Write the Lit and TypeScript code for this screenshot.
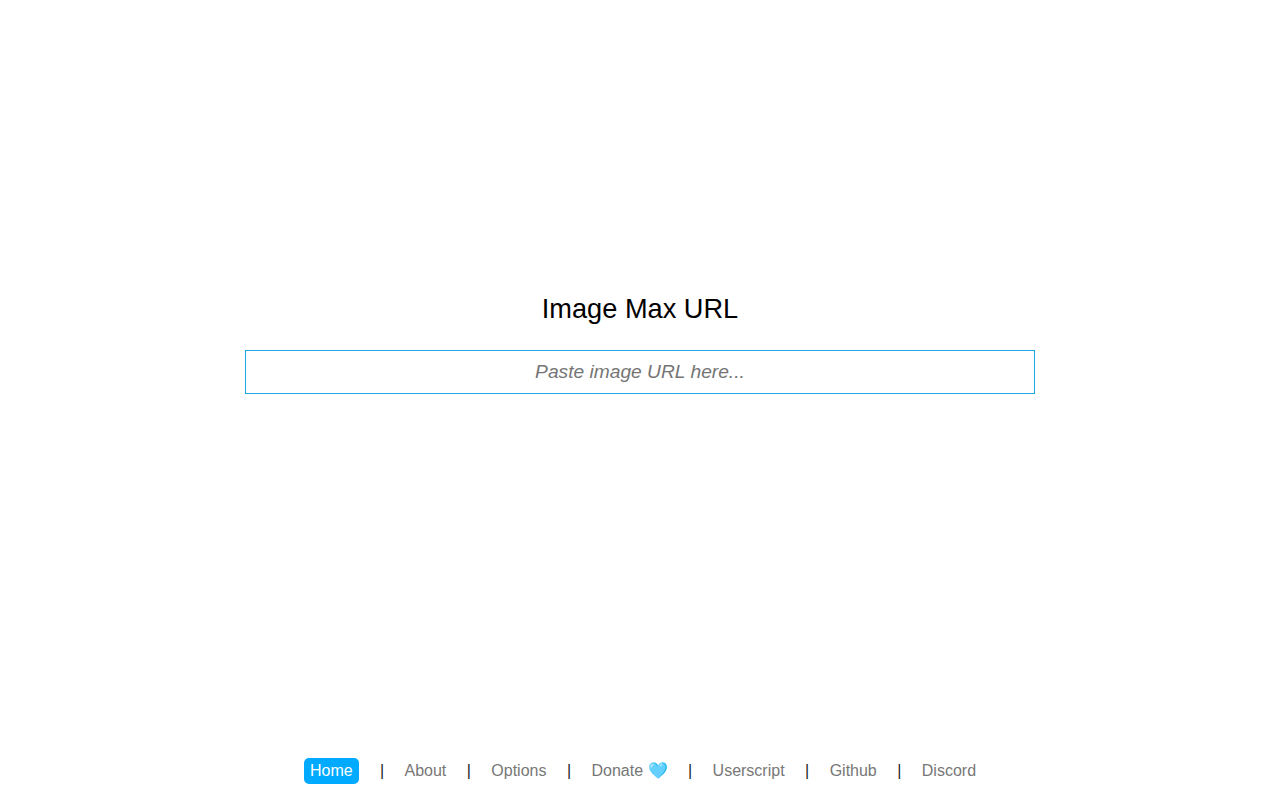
import { LitElement, html, css } from "lit";
import { customElement } from "lit/decorators.js";

@customElement("app-root")
export class AppRoot extends LitElement {
  static styles = css`
    :host { display: flex; flex-direction: column; align-items: center; height: 800px; font-family: "Liberation Sans", Arial, sans-serif; background: #fff; }
    .main { display: flex; flex-direction: column; align-items: center; padding-top: 293px; flex: 1; }
    h1 { margin: 0 0 25px; font-size: 27.2px; font-weight: 400; line-height: 32px; color: #000; }
    input { box-sizing: border-box; width: 790px; height: 44px; border: 1px solid #1fa9e0; outline: none; text-align: center; font: 19.2px "Liberation Sans", Arial, sans-serif; padding: 0 10px; }
    input::placeholder { font-style: italic; color: #757575; opacity: 1; }
    nav { display: flex; align-items: center; gap: 20.45px; height: 26px; margin-bottom: 16px; font-size: 16px; color: #222; }
    a { color: #777; text-decoration: none; line-height: 26px; }
    a.active { background: #00aaff; color: #fff; padding: 0 6px; border-radius: 5px; margin-right: 0.8px; }
  `;
  render() {
    const links = ["About", "Options", "Donate 🩵", "Userscript", "Github", "Discord"];
    return html`<div class="main"><h1>Image Max URL</h1><input placeholder="Paste image URL here..." /></div>
    <nav><a class="active">Home</a>${links.map(l => html`<span>|</span><a>${l}</a>`)}</nav>`;
  }
}
